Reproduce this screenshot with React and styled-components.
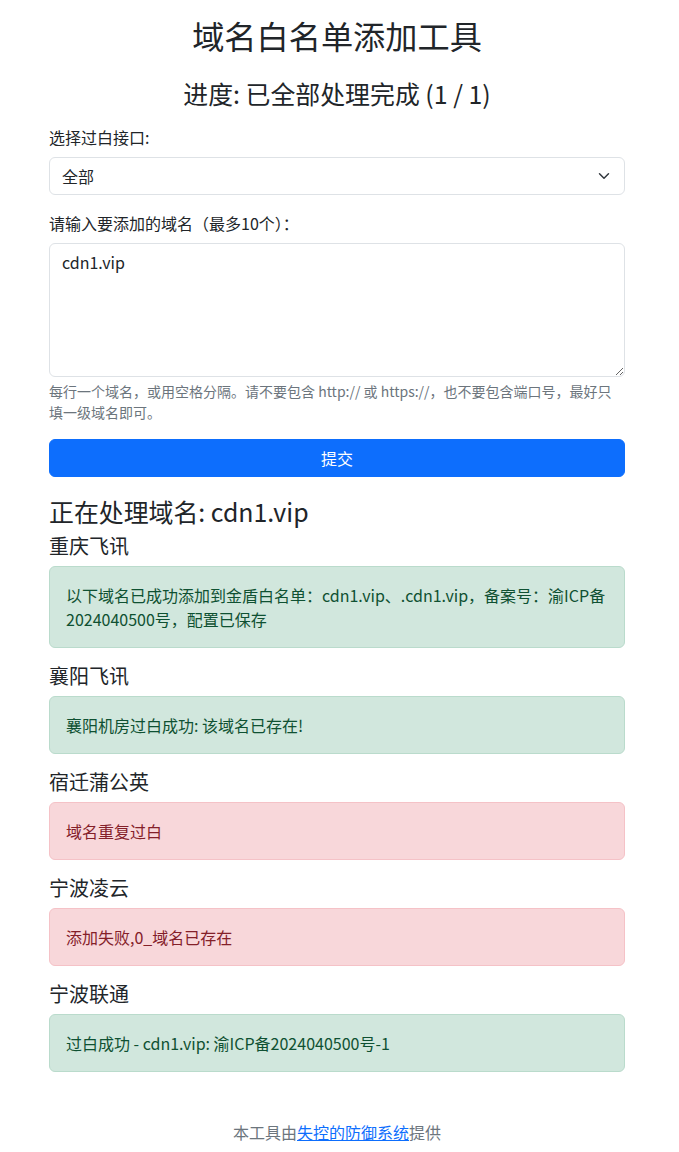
import React from "react";
import styled, { createGlobalStyle } from "styled-components";

const GlobalStyle = createGlobalStyle`
  * {
    box-sizing: border-box;
  }
  body {
    margin: 0 5px 0 0;
    background: #fff;
    color: #212529;
    font-family: "Noto Sans CJK SC", "Noto Sans", sans-serif;
    font-size: 16px;
    line-height: 1.5;
  }
`;

const results = [
  {
    name: "重庆飞讯",
    ok: true,
    text: "以下域名已成功添加到金盾白名单：cdn1.vip、.cdn1.vip，备案号：渝ICP备2024040500号，配置已保存",
  },
  { name: "襄阳飞讯", ok: true, text: "襄阳机房过白成功: 该域名已存在!" },
  { name: "宿迁蒲公英", ok: false, text: "域名重复过白" },
  { name: "宁波凌云", ok: false, text: "添加失败,0_域名已存在" },
  { name: "宁波联通", ok: true, text: "过白成功 - cdn1.vip: 渝ICP备2024040500号-1" },
];

const App = () => {
  return (
    <Container>
      <GlobalStyle />
      <Title>域名白名单添加工具</Title>
      <Progress>进度: 已全部处理完成 (1 / 1)</Progress>
      <Field>
        <Label htmlFor="api">选择过白接口:</Label>
        <Select id="api" defaultValue="all">
          <option value="all">全部</option>
        </Select>
      </Field>
      <Field>
        <Label htmlFor="domains">请输入要添加的域名（最多10个）：</Label>
        <TextArea id="domains" rows={5} defaultValue="cdn1.vip" />
        <Help>
          每行一个域名，或用空格分隔。请不要包含 http:// 或 https://，也不要包含端口号，最好只填一级域名即可。
        </Help>
      </Field>
      <SubmitButton type="button">提交</SubmitButton>
      <ResultTitle>正在处理域名: cdn1.vip</ResultTitle>
      {results.map((r) => (
        <div key={r.name}>
          <StationName>{r.name}</StationName>
          <Alert $ok={r.ok}>{r.text}</Alert>
        </div>
      ))}
      <Footer>
        本工具由<FooterLink href="#">失控的防御系统</FooterLink>提供
      </Footer>
    </Container>
  );
};

export default App;

const Container = styled.div`
  max-width: 600px;
  margin: 0 auto;
  padding: 16px 12px 0;
`;

const Title = styled.h1`
  margin: 0 0 24px;
  font-size: 32.2px;
  font-weight: 400;
  line-height: 1.2;
  text-align: center;
`;

const Progress = styled.h3`
  margin: 0 0 16px;
  font-size: 24.9px;
  font-weight: 400;
  line-height: 1.2;
  text-align: center;
`;

const Field = styled.div`
  margin-bottom: 16px;
`;

const Label = styled.label`
  display: inline-block;
  margin-bottom: 8px;
`;

const Select = styled.select`
  display: block;
  width: 100%;
  height: 38px;
  padding: 6px 36px 6px 12px;
  font: inherit;
  color: #212529;
  background-color: #fff;
  background-image: url("data:image/svg+xml,%3csvg xmlns='http://www.w3.org/2000/svg' viewBox='0 0 16 16'%3e%3cpath fill='none' stroke='%23343a40' stroke-linecap='round' stroke-linejoin='round' stroke-width='2' d='m2 5 6 6 6-6'/%3e%3c/svg%3e");
  background-repeat: no-repeat;
  background-position: right 12px center;
  background-size: 16px 12px;
  border: 1px solid #dee2e6;
  border-radius: 6px;
  appearance: none;
`;

const TextArea = styled.textarea`
  display: block;
  width: 100%;
  padding: 6px 12px;
  font: inherit;
  line-height: 1.5;
  color: #212529;
  background: #fff;
  border: 1px solid #dee2e6;
  border-radius: 6px;
  resize: vertical;
`;

const Help = styled.div`
  margin-top: 4px;
  font-size: 14px;
  line-height: 1.5;
  color: #6c757d;
`;

const SubmitButton = styled.button`
  display: block;
  width: 100%;
  height: 38px;
  padding: 6px 12px;
  font: inherit;
  color: #fff;
  background: #0d6efd;
  border: 1px solid #0d6efd;
  border-radius: 6px;
  cursor: pointer;
`;

const ResultTitle = styled.h3`
  margin: 20px 0 8px;
  font-size: 24.9px;
  font-weight: 400;
  line-height: 1.2;
`;

const StationName = styled.h5`
  margin: 0 0 8px;
  font-size: 20px;
  font-weight: 400;
  line-height: 1.2;
`;

const Alert = styled.div`
  margin-bottom: 16px;
  padding: 16px;
  border: 1px solid ${(p) => (p.$ok ? "#badbcc" : "#f5c2c7")};
  border-radius: 6px;
  background: ${(p) => (p.$ok ? "#d1e7dd" : "#f8d7da")};
  color: ${(p) => (p.$ok ? "#0f5132" : "#842029")};
`;

const Footer = styled.footer`
  margin-top: 48px;
  padding-bottom: 16px;
  text-align: center;
  color: #6c757d;
`;

const FooterLink = styled.a`
  color: #0d6efd;
  text-decoration: underline;
`;
